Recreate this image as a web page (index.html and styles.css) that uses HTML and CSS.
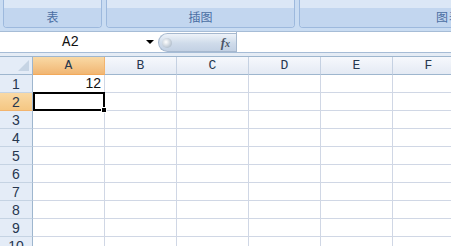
FILE: index.html
```html
<!DOCTYPE html>
<html lang="zh-CN">
<head>
  <meta charset="UTF-8">
  <title>Excel</title>
  <link rel="stylesheet" href="styles.css">
</head>
<body>
  <div class="ribbon">
    <div class="group g-table"><div class="group-label">表</div></div>
    <div class="group g-pic"><div class="group-label">插图</div></div>
    <div class="group g-chart"><div class="group-label">图表</div></div>
  </div>

  <div class="formula-bar">
    <div class="name-box">
      <span class="name-text">A2</span>
      <span class="name-arrow"></span>
    </div>
    <div class="fx-pill">
      <span class="knob"></span>
      <span class="fx">f<sub>x</sub></span>
    </div>
    <div class="formula-input"></div>
  </div>

  <div class="sheet">
    <div class="corner"></div>
    <div class="col-head active">A</div>
    <div class="col-head">B</div>
    <div class="col-head">C</div>
    <div class="col-head">D</div>
    <div class="col-head">E</div>
    <div class="col-head">F</div>

    <div class="row-head">1</div>
    <div class="cell num">12</div><div class="cell"></div><div class="cell"></div><div class="cell"></div><div class="cell"></div><div class="cell"></div>

    <div class="row-head active">2</div>
    <div class="cell selected"><span class="fill-handle"></span></div><div class="cell"></div><div class="cell"></div><div class="cell"></div><div class="cell"></div><div class="cell"></div>

    <div class="row-head">3</div>
    <div class="cell"></div><div class="cell"></div><div class="cell"></div><div class="cell"></div><div class="cell"></div><div class="cell"></div>
    <div class="row-head">4</div>
    <div class="cell"></div><div class="cell"></div><div class="cell"></div><div class="cell"></div><div class="cell"></div><div class="cell"></div>
    <div class="row-head">5</div>
    <div class="cell"></div><div class="cell"></div><div class="cell"></div><div class="cell"></div><div class="cell"></div><div class="cell"></div>
    <div class="row-head">6</div>
    <div class="cell"></div><div class="cell"></div><div class="cell"></div><div class="cell"></div><div class="cell"></div><div class="cell"></div>
    <div class="row-head">7</div>
    <div class="cell"></div><div class="cell"></div><div class="cell"></div><div class="cell"></div><div class="cell"></div><div class="cell"></div>
    <div class="row-head">8</div>
    <div class="cell"></div><div class="cell"></div><div class="cell"></div><div class="cell"></div><div class="cell"></div><div class="cell"></div>
    <div class="row-head">9</div>
    <div class="cell"></div><div class="cell"></div><div class="cell"></div><div class="cell"></div><div class="cell"></div><div class="cell"></div>
    <div class="row-head">10</div>
    <div class="cell"></div><div class="cell"></div><div class="cell"></div><div class="cell"></div><div class="cell"></div><div class="cell"></div>
  </div>
</body>
</html>
```

FILE: styles.css
```css
:root {
  --ribbon-bg: #c9dcf2;
  --group-top: #dbe7f6;
  --group-label: #c2d6ef;
  --group-border: #9db9dd;
  --label-text: #4a6ea3;
  --grid: #d0d7e5;
  --head-bg: #e4ecf7;
  --head-border: #9eb6ce;
  --sel-orange: #f8c98a;
}

* {
  margin: 0;
  padding: 0;
  box-sizing: border-box;
}

body {
  width: 451px;
  height: 246px;
  overflow: hidden;
  background: #ffffff;
  font-family: "Liberation Sans", "Noto Sans CJK SC", sans-serif;
}

/* ribbon bottom strip */
.ribbon {
  display: flex;
  gap: 4px;
  height: 31px;
  padding: 0 0 3px 3px;
  background: var(--ribbon-bg);
}
.group {
  display: flex;
  flex-direction: column;
  justify-content: flex-end;
  height: 28px;
  background: var(--group-top);
  border: 1px solid var(--group-border);
  border-top: none;
  border-radius: 0 0 4px 4px;
  flex-shrink: 0;
}
.g-table { width: 99px; }
.g-pic { width: 189px; }
.g-chart { width: 170px; }
.group-label {
  height: 19px;
  line-height: 18px;
  background: var(--group-label);
  border-radius: 0 0 3px 3px;
  text-align: center;
  font-size: 12px;
  color: var(--label-text);
  font-family: "Noto Sans CJK SC", sans-serif;
}
.g-chart .group-label {
  text-align: right;
  padding-right: 6px;
  letter-spacing: 1px;
}

/* formula bar */
.formula-bar {
  display: flex;
  height: 22px;
  background: #ffffff;
  border-top: 1px solid #a6bcd6;
  border-bottom: 1px solid #a6bcd6;
  margin-bottom: 3px;
  box-shadow: 0 3px 0 #e5ecf5;
}
.name-box {
  display: flex;
  align-items: center;
  width: 158px;
  padding: 0 0 0 62px;
  flex-shrink: 0;
}
.name-text {
  font-family: "Liberation Mono", monospace;
  font-size: 14px;
  color: #111;
  width: 84px;
}
.name-arrow {
  width: 0;
  height: 0;
  border-left: 4px solid transparent;
  border-right: 4px solid transparent;
  border-top: 4px solid #000;
}
.fx-pill {
  display: flex;
  align-items: center;
  justify-content: space-between;
  width: 78px;
  height: 19px;
  margin-top: 1px;
  padding: 0 6px 0 3px;
  border: 1px solid #a6b8ce;
  border-right: none;
  border-radius: 10px 0 0 10px;
  background: linear-gradient(#eef3f9, #cfdbea 55%, #c3d1e4);
  flex-shrink: 0;
}
.knob {
  width: 10px;
  height: 10px;
  border-radius: 50%;
  background: radial-gradient(circle at 40% 40%, #ffffff, #b7c3d0 70%, #9aa8b8);
}
.fx {
  font-family: "Liberation Serif", serif;
  font-style: italic;
  font-weight: bold;
  font-size: 13px;
  color: #4b5566;
}
.fx sub {
  font-size: 10px;
  vertical-align: baseline;
}
.formula-input {
  flex: 1;
  border-left: 1px solid #a6b8ce;
}

/* sheet */
.sheet {
  display: grid;
  grid-template-columns: 33px repeat(6, 72px);
  grid-auto-rows: 18px;
  border-top: 1px solid #9eb6ce;
}
.corner {
  position: relative;
  background: var(--head-bg);
  border-right: 1px solid var(--head-border);
  border-bottom: 1px solid var(--head-border);
}
.corner::after {
  content: "";
  position: absolute;
  right: 3px;
  bottom: 3px;
  border-left: 11px solid transparent;
  border-bottom: 11px solid #c6d4e4;
}
.col-head {
  display: flex;
  align-items: center;
  justify-content: center;
  background: linear-gradient(#f6f8fc, #e4eaf4);
  border-right: 1px solid #c5d1e2;
  border-bottom: 1px solid var(--head-border);
  font-family: "Liberation Mono", monospace;
  font-size: 13px;
  color: #27374f;
}
.col-head.active {
  background: linear-gradient(#f9d9a5, #f1b673);
  border-right-color: #f2b46e;
  border-bottom-color: #f2a95a;
}
.row-head {
  display: flex;
  align-items: center;
  justify-content: center;
  background: var(--head-bg);
  border-right: 1px solid var(--head-border);
  border-bottom: 1px solid #c5d3e3;
  font-size: 14px;
  color: #27374f;
}
.row-head.active {
  background: linear-gradient(#f9d9a5, #f5c783);
  border-bottom-color: #f2b46e;
}
.cell {
  border-right: 1px solid var(--grid);
  border-bottom: 1px solid var(--grid);
}
.num {
  text-align: right;
  padding-right: 3px;
  font-size: 14px;
  line-height: 17px;
  color: #111;
}
.selected {
  position: relative;
  border: 2px solid #000;
  margin: -1px 0 0 0;
}
.fill-handle {
  position: absolute;
  right: -4px;
  bottom: -4px;
  width: 6px;
  height: 6px;
  background: #000;
  border: 1px solid #fff;
}
```
